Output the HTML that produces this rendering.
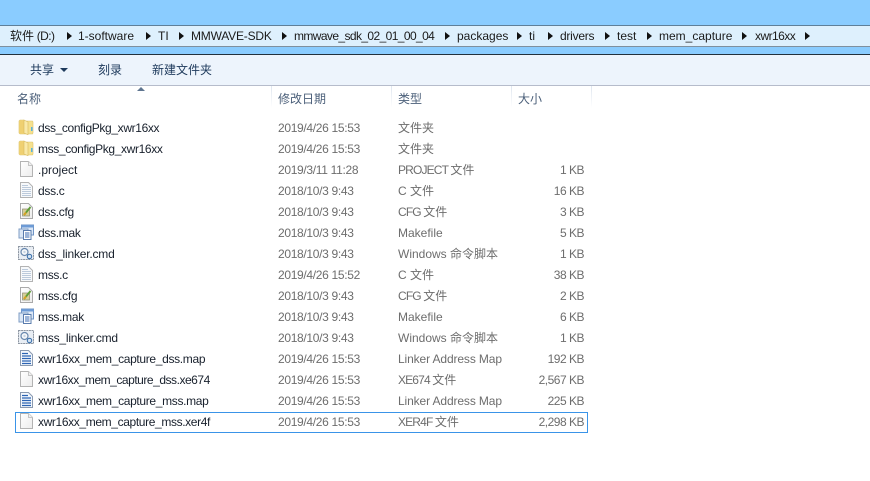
<!DOCTYPE html>
<html><head><meta charset="utf-8">
<style>
html,body{margin:0;padding:0;background:#fff}
#p{position:relative;width:870px;height:481px;overflow:hidden;background:#fff;font-family:"Liberation Sans","Noto Sans CJK SC",sans-serif;font-size:12px;color:#1e2a3a}
#p div,#p span.c,#p span.b,#p span.h,#p span.tb,#p svg{position:absolute;white-space:nowrap}
.c{line-height:16px;height:16px}
.n{left:38px;letter-spacing:-.3px;color:#18202c}
.d{left:278px;color:#6d6d6d;letter-spacing:-.32px}
.t{left:398px;color:#6d6d6d}
.s{right:286px;color:#6d6d6d;letter-spacing:-.5px}
.u{letter-spacing:-.85px}
.h{top:91px;color:#4c607a;line-height:16px}
.b{top:28px;line-height:16px;color:#1a1a1a}
.a{top:32px;width:0;height:0;border-left:5px solid #111;border-top:4px solid transparent;border-bottom:4px solid transparent}
.i{left:18px;width:16px;height:16px}
.tb{top:62px;line-height:16px;color:#1e3a5c}
</style></head><body>
<div id="p">
<svg width="0" height="0" style="position:absolute">
<defs>
<linearGradient id="pg" x1="0" y1="0" x2="1" y2="1"><stop offset="0" stop-color="#ffffff"/><stop offset="1" stop-color="#ececec"/></linearGradient>
<symbol id="folder" viewBox="0 0 16 16"><path d="M1 2 2 1H6L7 2H14.500L15 3V14L14.500 15H2L1 14Z" fill="#f5e18f" stroke="#dcc26c" stroke-width=".6"/><path d="M1.300 2.500 2 1.300H6V14.700H2L1.300 14Z" fill="#efd071"/><path d="M6 1 10 3V15.700L6 14Z" fill="#f9e9a8" stroke="#d8ba5e" stroke-width=".6"/><rect x="13" y="8" width="1.500" height="4" fill="#57b3e2"/></symbol>
<symbol id="blank" viewBox="0 0 16 16"><path d="M2.500 .5H10.500L14.500 4.500V15.500H2.500Z" fill="url(#pg)" stroke="#b3b3b3"/><path d="M10.500 .5V4.500H14.500" fill="#f0f0f0" stroke="#c4c4c4"/></symbol>
<symbol id="text" viewBox="0 0 16 16"><path d="M2.500 .5H10.500L14.500 4.500V15.500H2.500Z" fill="#f7f9fb" stroke="#b3b3b3"/><path d="M4 3.500H10M4 5.500H13M4 7.500H13M4 9.500H13M4 11.500H13M4 13.500H13" stroke="#bccadb"/></symbol>
<symbol id="cfg" viewBox="0 0 16 16"><path d="M2.500 .5H10.500L14.500 4.500V15.500H2.500Z" fill="url(#pg)" stroke="#aaaaaa"/><rect x="4.500" y="6" width="7" height="7" fill="#d8cf9a" stroke="#8a8a70" stroke-width=".7"/><path d="M6 12 12.500 4" stroke="#5e9e36" stroke-width="1.800"/><path d="M6 12 8 9.500" stroke="#e0a020" stroke-width="1.800"/></symbol>
<symbol id="mak" viewBox="0 0 16 16"><rect x="3.500" y="1" width="12" height="10" fill="#dbe7f6" stroke="#6f94c6"/><rect x="3.500" y="1" width="12" height="2.500" fill="#6d9bd6"/><rect x="1" y="5" width="9" height="9" fill="#dbe7f6" stroke="#7f9dc4"/><rect x="5.500" y="6.500" width="7.500" height="9" fill="#fff" stroke="#5a7cae"/><path d="M7 9H11.500M7 11H11.500M7 13H11.500" stroke="#3a68b0"/></symbol>
<symbol id="cmd" viewBox="0 0 16 16"><rect x=".5" y="1.500" width="15" height="13" fill="#e9eef4" stroke="#8d96a2" stroke-dasharray="2 .6"/><circle cx="6.500" cy="7" r="3.500" fill="#f7f9fb" stroke="#6a89ae" stroke-width="1.200"/><circle cx="6.500" cy="7" r="1.200" fill="#c7d5e4"/><circle cx="11.500" cy="11.500" r="2.200" fill="#d4e2f0" stroke="#3f73ad" stroke-width="1.100"/></symbol>
<symbol id="map" viewBox="0 0 16 16"><path d="M2.500 .5H10.500L14.500 4.500V15.500H2.500Z" fill="#f4f8fd" stroke="#8a9ab0"/><path d="M4 3.500H10M4 6H13M4 8.500H13M4 11H13M4 13.500H13" stroke="#2c64b4" stroke-width="1.200"/></symbol>
</defs></svg>

<div style="left:0;top:0;width:870px;height:54px;background:#8accff"></div>
<div style="left:0;top:25px;width:870px;height:22px;box-sizing:border-box;background:#def0fd;border-top:1px solid #5e7f99;border-bottom:1px solid #7f909e"></div>
<div style="left:0;top:54px;width:870px;height:1px;background:#22303c"></div>
<div style="left:0;top:55px;width:870px;height:30px;background:#edf4fc"></div>
<div style="left:0;top:85px;width:870px;height:1px;background:#b6bccb"></div>

<span class="b" style="left:10px">软件<span style="letter-spacing:-.6px"> (D:)</span></span><div class="a" style="left:67px"></div>
<span class="b" style="left:78px">1-software</span><div class="a" style="left:146px"></div>
<span class="b" style="left:158px">TI</span><div class="a" style="left:179px"></div>
<span class="b" style="left:191px;letter-spacing:-.2px">MMWAVE-SDK</span><div class="a" style="left:282px"></div>
<span class="b" style="left:294px;letter-spacing:-.6px">mmwave_sdk_02_01_00_04</span><div class="a" style="left:445px"></div>
<span class="b" style="left:457px">packages</span><div class="a" style="left:517px"></div>
<span class="b" style="left:529px">ti</span><div class="a" style="left:548px"></div>
<span class="b" style="left:560px;letter-spacing:-.25px">drivers</span><div class="a" style="left:605px"></div>
<span class="b" style="left:617px">test</span><div class="a" style="left:647px"></div>
<span class="b" style="left:659px">mem_capture</span><div class="a" style="left:742px"></div>
<span class="b" style="left:755px;letter-spacing:-.55px">xwr16xx</span><div class="a" style="left:805px"></div>

<span class="tb" style="left:30px">共享</span>
<div style="left:60px;top:68px;width:0;height:0;border-top:4px solid #1e3a5c;border-left:4px solid transparent;border-right:4px solid transparent"></div>
<span class="tb" style="left:98px">刻录</span>
<span class="tb" style="left:152px">新建文件夹</span>

<div style="left:137px;top:87px;width:0;height:0;border-bottom:4px solid #5f7590;border-left:4px solid transparent;border-right:4px solid transparent"></div>
<span class="h" style="left:17px">名称</span>
<span class="h" style="left:278px">修改日期</span>
<span class="h" style="left:398px">类型</span>
<span class="h" style="left:518px">大小</span>
<div style="left:271px;top:86px;width:1px;height:22px;background:linear-gradient(#dfe6ef,#fff)"></div>
<div style="left:391px;top:86px;width:1px;height:22px;background:linear-gradient(#dfe6ef,#fff)"></div>
<div style="left:511px;top:86px;width:1px;height:22px;background:linear-gradient(#dfe6ef,#fff)"></div>
<div style="left:591px;top:86px;width:1px;height:22px;background:linear-gradient(#dfe6ef,#fff)"></div>

<div style="left:15px;top:412px;width:573px;height:21px;box-sizing:border-box;border:1px solid #3a94e8"></div>

<svg class="i" style="top:119px"><use href="#folder"/></svg><span class="c n" style="top:120px;letter-spacing:-.36px">dss_configPkg_xwr16xx</span><span class="c d" style="top:120px">2019/4/26 15:53</span><span class="c t" style="top:120px">文件夹</span>
<svg class="i" style="top:140px"><use href="#folder"/></svg><span class="c n" style="top:141px;letter-spacing:-.36px">mss_configPkg_xwr16xx</span><span class="c d" style="top:141px">2019/4/26 15:53</span><span class="c t" style="top:141px">文件夹</span>
<svg class="i" style="top:161px"><use href="#blank"/></svg><span class="c n" style="top:162px;letter-spacing:0">.project</span><span class="c d" style="top:162px">2019/3/11 11:28</span><span class="c t" style="top:162px"><span class="u">PROJECT </span>文件</span><span class="c s" style="top:162px">1 KB</span>
<svg class="i" style="top:182px"><use href="#text"/></svg><span class="c n" style="top:183px">dss.c</span><span class="c d" style="top:183px">2018/10/3 9:43</span><span class="c t" style="top:183px">C 文件</span><span class="c s" style="top:183px">16 KB</span>
<svg class="i" style="top:203px"><use href="#cfg"/></svg><span class="c n" style="top:204px">dss.cfg</span><span class="c d" style="top:204px">2018/10/3 9:43</span><span class="c t" style="top:204px"><span class="u">CFG </span>文件</span><span class="c s" style="top:204px">3 KB</span>
<svg class="i" style="top:224px"><use href="#mak"/></svg><span class="c n" style="top:225px">dss.mak</span><span class="c d" style="top:225px">2018/10/3 9:43</span><span class="c t" style="top:225px">Makefile</span><span class="c s" style="top:225px">5 KB</span>
<svg class="i" style="top:245px"><use href="#cmd"/></svg><span class="c n" style="top:246px;letter-spacing:-.2px">dss_linker.cmd</span><span class="c d" style="top:246px">2018/10/3 9:43</span><span class="c t" style="top:246px">Windows 命令脚本</span><span class="c s" style="top:246px">1 KB</span>
<svg class="i" style="top:266px"><use href="#text"/></svg><span class="c n" style="top:267px">mss.c</span><span class="c d" style="top:267px">2019/4/26 15:52</span><span class="c t" style="top:267px">C 文件</span><span class="c s" style="top:267px">38 KB</span>
<svg class="i" style="top:287px"><use href="#cfg"/></svg><span class="c n" style="top:288px">mss.cfg</span><span class="c d" style="top:288px">2018/10/3 9:43</span><span class="c t" style="top:288px"><span class="u">CFG </span>文件</span><span class="c s" style="top:288px">2 KB</span>
<svg class="i" style="top:308px"><use href="#mak"/></svg><span class="c n" style="top:309px">mss.mak</span><span class="c d" style="top:309px">2018/10/3 9:43</span><span class="c t" style="top:309px">Makefile</span><span class="c s" style="top:309px">6 KB</span>
<svg class="i" style="top:329px"><use href="#cmd"/></svg><span class="c n" style="top:330px;letter-spacing:-.2px">mss_linker.cmd</span><span class="c d" style="top:330px">2018/10/3 9:43</span><span class="c t" style="top:330px">Windows 命令脚本</span><span class="c s" style="top:330px">1 KB</span>
<svg class="i" style="top:350px"><use href="#map"/></svg><span class="c n" style="top:351px;letter-spacing:-.33px">xwr16xx_mem_capture_dss.map</span><span class="c d" style="top:351px">2019/4/26 15:53</span><span class="c t" style="top:351px;letter-spacing:-.12px">Linker Address Map</span><span class="c s" style="top:351px">192 KB</span>
<svg class="i" style="top:371px"><use href="#blank"/></svg><span class="c n" style="top:372px;letter-spacing:-.47px">xwr16xx_mem_capture_dss.xe674</span><span class="c d" style="top:372px">2019/4/26 15:53</span><span class="c t" style="top:372px"><span class="u">XE674 </span>文件</span><span class="c s" style="top:372px">2,567 KB</span>
<svg class="i" style="top:392px"><use href="#map"/></svg><span class="c n" style="top:393px;letter-spacing:-.33px">xwr16xx_mem_capture_mss.map</span><span class="c d" style="top:393px">2019/4/26 15:53</span><span class="c t" style="top:393px;letter-spacing:-.12px">Linker Address Map</span><span class="c s" style="top:393px">225 KB</span>
<svg class="i" style="top:413px"><use href="#blank"/></svg><span class="c n" style="top:414px;letter-spacing:-.37px">xwr16xx_mem_capture_mss.xer4f</span><span class="c d" style="top:414px">2019/4/26 15:53</span><span class="c t" style="top:414px"><span class="u">XER4F </span>文件</span><span class="c s" style="top:414px">2,298 KB</span>
</div>
</body></html>
